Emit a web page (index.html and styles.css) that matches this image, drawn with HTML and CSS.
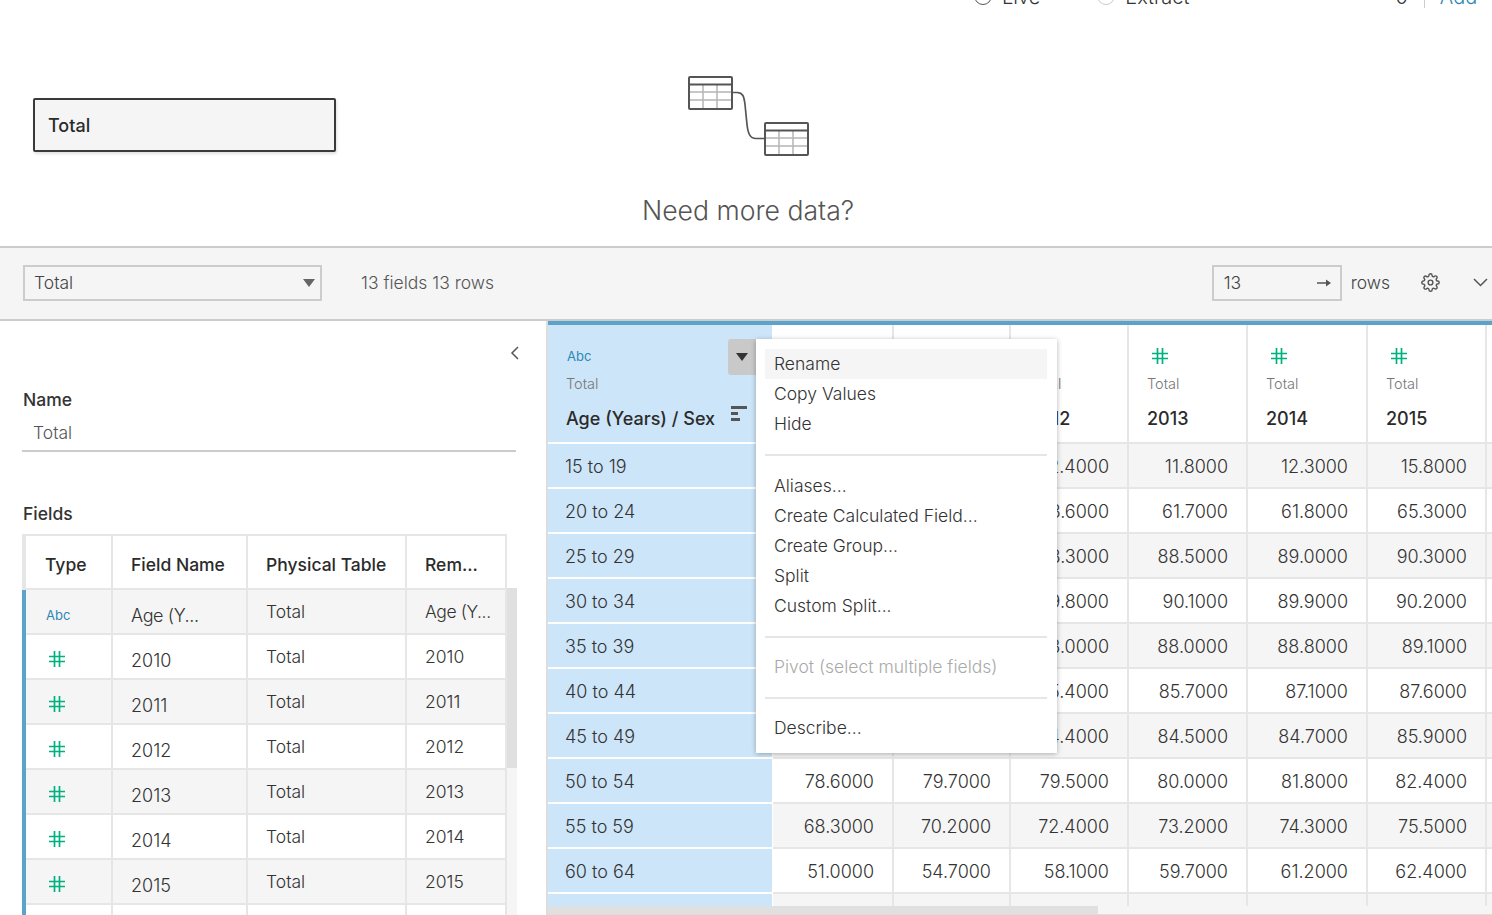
FILE: index.html
```html
<!DOCTYPE html>
<html lang="en">
<head>
  <meta charset="UTF-8">
  <title>Data Source</title>
  <link rel="stylesheet" href="styles.css">
</head>
<body>
  <div class="top-strip">
    <span class="radio"></span><span class="conn-label">Live</span>
    <span class="radio radio-off"></span><span class="conn-label">Extract</span>
    <span class="filter-count">0</span>
    <span class="filter-sep"></span>
    <span class="add-link">Add</span>
  </div>

  <section class="canvas">
    <div class="canvas-side">
      <div class="table-pill">Total</div>
    </div>
    <div class="need-data">
      <svg class="tables-art" width="122" height="82" viewBox="0 0 122 82">
        <g fill="none" stroke="#b5b5b5" stroke-width="1.5">
          <path d="M2 16h41M2 24h41M15 9v24M29 9v24"/>
          <path d="M78 62h41M78 70h41M91 55v24M105 55v24"/>
        </g>
        <g fill="none" stroke="#555" stroke-width="2">
          <rect x="1" y="1" width="43" height="32" rx="1"/>
          <path d="M1 8.500h43"/>
          <rect x="77" y="47" width="43" height="32" rx="1"/>
          <path d="M77 54.500h43"/>
          <path d="M44 16.500h5c6 0 7 4 8 12l2 20c1 9 3 14 9 14h9" stroke-width="1.700"/>
        </g>
      </svg>
      <div class="need-title">Need more data?</div>
    </div>
  </section>

  <div class="toolbar">
    <div class="select-box">
      <span>Total</span>
      <span class="caret"></span>
    </div>
    <span class="summary">13 fields 13 rows</span>
    <div class="rows-input">
      <span>13</span>
      <svg width="14" height="10" viewBox="0 0 14 10"><path d="M0 5h10" stroke="#555" stroke-width="1.500"/><path d="M9 1.500l5 3.500-5 3.500z" fill="#555"/></svg>
    </div>
    <span class="rows-label">rows</span>
    <svg class="gear" width="19" height="19" viewBox="0 0 24 24" fill="none" stroke="#555" stroke-width="1.800"><circle cx="12" cy="12" r="3"/><path d="M19.4 15a1.65 1.65 0 0 0 .33 1.82l.06.06a2 2 0 0 1 0 2.83 2 2 0 0 1-2.83 0l-.06-.06a1.65 1.65 0 0 0-1.82-.33 1.65 1.65 0 0 0-1 1.51V21a2 2 0 0 1-2 2 2 2 0 0 1-2-2v-.09A1.65 1.65 0 0 0 9 19.4a1.65 1.65 0 0 0-1.82.33l-.06.06a2 2 0 0 1-2.83 0 2 2 0 0 1 0-2.83l.06-.06a1.65 1.65 0 0 0 .33-1.82 1.65 1.65 0 0 0-1.51-1H3a2 2 0 0 1-2-2 2 2 0 0 1 2-2h.09A1.65 1.65 0 0 0 4.600 9a1.65 1.65 0 0 0-.33-1.82l-.06-.06a2 2 0 0 1 0-2.83 2 2 0 0 1 2.83 0l.06.06a1.65 1.65 0 0 0 1.82.33H9a1.65 1.65 0 0 0 1-1.51V3a2 2 0 0 1 2-2 2 2 0 0 1 2 2v.09a1.65 1.65 0 0 0 1 1.51 1.65 1.65 0 0 0 1.82-.33l.06-.06a2 2 0 0 1 2.83 0 2 2 0 0 1 0 2.83l-.06.06a1.65 1.65 0 0 0-.33 1.82V9a1.65 1.65 0 0 0 1.51 1H21a2 2 0 0 1 2 2 2 2 0 0 1-2 2h-.09a1.65 1.65 0 0 0-1.51 1z"/></svg>
    <svg class="chevron" width="15" height="9" viewBox="0 0 15 9"><path d="M1 1l6.500 6.500L14 1" fill="none" stroke="#555" stroke-width="1.500"/></svg>
  </div>

  <div class="main">
    <aside class="side">
      <div class="collapse-row">
        <svg width="9" height="14" viewBox="0 0 9 14"><path d="M8 1L2 7l6 6" fill="none" stroke="#555" stroke-width="1.500"/></svg>
      </div>
      <div class="side-label">Name</div>
      <div class="name-field">Total</div>
      <div class="side-label fields-label">Fields</div>

      <div class="fields-wrap">
        <div class="fields">
          <div class="f-row f-head">
            <div class="f-cell">Type</div>
            <div class="f-cell">Field Name</div>
            <div class="f-cell">Physical Table</div>
            <div class="f-cell">Rem...</div>
          </div>
          <div class="f-row alt">
            <div class="f-cell type-cell"><span class="abc">Abc</span></div>
            <div class="f-cell low trim">Age (Y...</div>
            <div class="f-cell">Total</div>
            <div class="f-cell trim">Age (Y...</div>
          </div>
          <div class="f-row">
            <div class="f-cell"><svg class="hash" viewBox="0 0 16 16"><path d="M5.500 0v16M10.500 0v16M0 5.500h16M0 10.500h16"/></svg></div>
            <div class="f-cell low">2010</div>
            <div class="f-cell">Total</div>
            <div class="f-cell">2010</div>
          </div>
          <div class="f-row alt">
            <div class="f-cell"><svg class="hash" viewBox="0 0 16 16"><path d="M5.500 0v16M10.500 0v16M0 5.500h16M0 10.500h16"/></svg></div>
            <div class="f-cell low">2011</div>
            <div class="f-cell">Total</div>
            <div class="f-cell">2011</div>
          </div>
          <div class="f-row">
            <div class="f-cell"><svg class="hash" viewBox="0 0 16 16"><path d="M5.500 0v16M10.500 0v16M0 5.500h16M0 10.500h16"/></svg></div>
            <div class="f-cell low">2012</div>
            <div class="f-cell">Total</div>
            <div class="f-cell">2012</div>
          </div>
          <div class="f-row alt">
            <div class="f-cell"><svg class="hash" viewBox="0 0 16 16"><path d="M5.500 0v16M10.500 0v16M0 5.500h16M0 10.500h16"/></svg></div>
            <div class="f-cell low">2013</div>
            <div class="f-cell">Total</div>
            <div class="f-cell">2013</div>
          </div>
          <div class="f-row">
            <div class="f-cell"><svg class="hash" viewBox="0 0 16 16"><path d="M5.500 0v16M10.500 0v16M0 5.500h16M0 10.500h16"/></svg></div>
            <div class="f-cell low">2014</div>
            <div class="f-cell">Total</div>
            <div class="f-cell">2014</div>
          </div>
          <div class="f-row alt">
            <div class="f-cell"><svg class="hash" viewBox="0 0 16 16"><path d="M5.500 0v16M10.500 0v16M0 5.500h16M0 10.500h16"/></svg></div>
            <div class="f-cell low">2015</div>
            <div class="f-cell">Total</div>
            <div class="f-cell">2015</div>
          </div>
          <div class="f-row">
            <div class="f-cell"></div>
            <div class="f-cell"></div>
            <div class="f-cell"></div>
            <div class="f-cell"></div>
          </div>
        </div>
        <div class="f-scroll"><div class="f-thumb"></div></div>
      </div>
    </aside>

    <div class="grid-area">
      <div class="grid">
        <div class="g-row g-head">
          <div class="g-cell first">
            <div class="g-type abc">Abc</div>
            <div class="g-table">Total</div>
            <div class="g-name">Age (Years) / Sex</div>
            <svg class="sort-icon" width="17" height="16" viewBox="0 0 17 16"><path d="M0 1.500h16M0 7.500h7M0 13.500h9" fill="none" stroke="#555" stroke-width="3"/></svg>
          </div>
          <div class="g-cell"></div>
          <div class="g-cell"></div>
          <div class="g-cell"><svg class="hash" viewBox="0 0 16 16"><path d="M5.500 0v16M10.500 0v16M0 5.500h16M0 10.500h16"/></svg><div class="g-table">Total</div><div class="g-name">2012</div></div>
          <div class="g-cell"><svg class="hash" viewBox="0 0 16 16"><path d="M5.500 0v16M10.500 0v16M0 5.500h16M0 10.500h16"/></svg><div class="g-table">Total</div><div class="g-name">2013</div></div>
          <div class="g-cell"><svg class="hash" viewBox="0 0 16 16"><path d="M5.500 0v16M10.500 0v16M0 5.500h16M0 10.500h16"/></svg><div class="g-table">Total</div><div class="g-name">2014</div></div>
          <div class="g-cell"><svg class="hash" viewBox="0 0 16 16"><path d="M5.500 0v16M10.500 0v16M0 5.500h16M0 10.500h16"/></svg><div class="g-table">Total</div><div class="g-name">2015</div></div>
          <div class="g-cell"></div>
        </div>
        <div class="g-row alt"><div class="g-cell first">15 to 19</div><div class="g-cell"></div><div class="g-cell"></div><div class="g-cell">12.4000</div><div class="g-cell">11.8000</div><div class="g-cell">12.3000</div><div class="g-cell">15.8000</div><div class="g-cell"></div></div>
        <div class="g-row"><div class="g-cell first">20 to 24</div><div class="g-cell"></div><div class="g-cell"></div><div class="g-cell">63.6000</div><div class="g-cell">61.7000</div><div class="g-cell">61.8000</div><div class="g-cell">65.3000</div><div class="g-cell"></div></div>
        <div class="g-row alt"><div class="g-cell first">25 to 29</div><div class="g-cell"></div><div class="g-cell"></div><div class="g-cell">88.3000</div><div class="g-cell">88.5000</div><div class="g-cell">89.0000</div><div class="g-cell">90.3000</div><div class="g-cell"></div></div>
        <div class="g-row"><div class="g-cell first">30 to 34</div><div class="g-cell"></div><div class="g-cell"></div><div class="g-cell">89.8000</div><div class="g-cell">90.1000</div><div class="g-cell">89.9000</div><div class="g-cell">90.2000</div><div class="g-cell"></div></div>
        <div class="g-row alt"><div class="g-cell first">35 to 39</div><div class="g-cell"></div><div class="g-cell"></div><div class="g-cell">88.0000</div><div class="g-cell">88.0000</div><div class="g-cell">88.8000</div><div class="g-cell">89.1000</div><div class="g-cell"></div></div>
        <div class="g-row"><div class="g-cell first">40 to 44</div><div class="g-cell"></div><div class="g-cell"></div><div class="g-cell">85.4000</div><div class="g-cell">85.7000</div><div class="g-cell">87.1000</div><div class="g-cell">87.6000</div><div class="g-cell"></div></div>
        <div class="g-row alt"><div class="g-cell first">45 to 49</div><div class="g-cell"></div><div class="g-cell"></div><div class="g-cell">84.4000</div><div class="g-cell">84.5000</div><div class="g-cell">84.7000</div><div class="g-cell">85.9000</div><div class="g-cell"></div></div>
        <div class="g-row"><div class="g-cell first">50 to 54</div><div class="g-cell">78.6000</div><div class="g-cell">79.7000</div><div class="g-cell">79.5000</div><div class="g-cell">80.0000</div><div class="g-cell">81.8000</div><div class="g-cell">82.4000</div><div class="g-cell"></div></div>
        <div class="g-row alt"><div class="g-cell first">55 to 59</div><div class="g-cell">68.3000</div><div class="g-cell">70.2000</div><div class="g-cell">72.4000</div><div class="g-cell">73.2000</div><div class="g-cell">74.3000</div><div class="g-cell">75.5000</div><div class="g-cell"></div></div>
        <div class="g-row"><div class="g-cell first">60 to 64</div><div class="g-cell">51.0000</div><div class="g-cell">54.7000</div><div class="g-cell">58.1000</div><div class="g-cell">59.7000</div><div class="g-cell">61.2000</div><div class="g-cell">62.4000</div><div class="g-cell"></div></div>
        <div class="g-row alt"><div class="g-cell first"></div><div class="g-cell"></div><div class="g-cell"></div><div class="g-cell"></div><div class="g-cell"></div><div class="g-cell"></div><div class="g-cell"></div><div class="g-cell"></div></div>
      </div>
      <div class="h-scroll"><div class="h-thumb"></div></div>

      <div class="drop-btn"><span class="caret dark"></span></div>
      <div class="menu">
        <div class="menu-item active">Rename</div>
        <div class="menu-item">Copy Values</div>
        <div class="menu-item">Hide</div>
        <div class="menu-sep first-sep"></div>
        <div class="menu-item">Aliases...</div>
        <div class="menu-item">Create Calculated Field...</div>
        <div class="menu-item">Create Group...</div>
        <div class="menu-item">Split</div>
        <div class="menu-item">Custom Split...</div>
        <div class="menu-sep"></div>
        <div class="menu-item disabled">Pivot (select multiple fields)</div>
        <div class="menu-sep"></div>
        <div class="menu-item">Describe...</div>
      </div>
    </div>
  </div>
</body>
</html>
```

FILE: styles.css
```css
* {
  box-sizing: border-box;
}

body {
  font-family: "Inter", "Open Sans", sans-serif;
  font-weight: 300;
  font-size: 17.500px;
  color: #333;
  margin: 0;
  padding: 0;
  height: 915px;
  overflow: hidden;
  background-color: #fff;
  display: flex;
  flex-direction: column;
}

/* cut off row at the very top */
.top-strip {
  height: 8px;
  flex: none;
  overflow: hidden;
  display: flex;
  align-items: flex-end;
  font-size: 20px;
  line-height: 20px;
}

.radio {
  width: 18px;
  height: 18px;
  margin-left: 974px;
  margin-bottom: 3px;
  border: 1.500px solid #555;
  border-radius: 50%;
  flex: none;
}

.radio-off {
  margin-left: 57px;
  border-color: #ccc;
}

.conn-label {
  margin-left: 10px;
  margin-bottom: 1px;
}

.filter-count {
  margin-left: 206px;
  margin-bottom: 1px;
}

.filter-sep {
  width: 1px;
  height: 8px;
  background-color: #ccc;
  margin-left: 16px;
}

.add-link {
  margin-left: 15px;
  margin-bottom: 1px;
  color: #2c88b5;
}

.canvas {
  height: 238px;
  flex: none;
  display: grid;
  grid-template-columns: 642px 212px 1fr;
}

.table-pill {
  width: 303px;
  height: 54px;
  margin: 90px 0 0 33px;
  padding-left: 13px;
  font-size: 18px;
  line-height: 51px;
  font-weight: 500;
  color: #2b2b2b;
  background-color: #f5f5f5;
  border: 2px solid #3a3a3a;
  border-radius: 2px;
  box-shadow: 1px 2px 3px rgba(0, 0, 0, 0.12);
}

.need-data {
  text-align: center;
  padding-top: 68px;
}

.tables-art {
  display: block;
  margin-left: 46px;
}

.need-title {
  font-size: 26.600px;
  color: #555;
  white-space: nowrap;
  margin-top: 36px;
  line-height: 32px;
}

.toolbar {
  height: 75px;
  flex: none;
  display: flex;
  align-items: center;
  background-color: #f5f5f5;
  border-top: 2px solid #ccc;
  border-bottom: 2px solid #ccc;
  padding: 0 0 2px 23px;
  color: #444;
}

.select-box {
  width: 299px;
  height: 36px;
  border: 2px solid #ccc;
  display: flex;
  align-items: center;
  justify-content: space-between;
  padding: 0 5px 0 9px;
}

.caret {
  width: 0;
  height: 0;
  border-left: 6px solid transparent;
  border-right: 6px solid transparent;
  border-top: 8px solid #666;
}

.caret.dark {
  border-top-color: #333;
}

.summary {
  margin-left: 39px;
  color: #555;
}

.rows-input {
  width: 130px;
  height: 36px;
  margin-left: auto;
  border: 2px solid #ccc;
  display: flex;
  align-items: center;
  justify-content: space-between;
  padding: 0 9px 0 10px;
}

.rows-label {
  margin-left: 9px;
}

.gear {
  margin-left: 31px;
}

.chevron {
  margin: 0 4px 0 33px;
}

.main {
  flex: 1;
  display: flex;
  min-height: 0;
}

.side {
  width: 548px;
  flex: none;
  padding-left: 22px;
  border-right: 2px solid #ddd;
  overflow: hidden;
}

.collapse-row {
  display: flex;
  justify-content: flex-end;
  padding: 25px 27px 0 0;
  height: 66px;
}

.side-label {
  font-weight: 500;
  line-height: 26px;
  color: #333;
  padding-left: 1px;
}

.name-field {
  width: 494px;
  height: 39px;
  padding: 7px 0 0 11px;
  line-height: 26px;
  border-bottom: 2px solid #ccc;
  color: #555;
}

.fields-label {
  margin-top: 49px;
}

.fields-wrap {
  display: flex;
  margin-top: 7px;
}

.fields {
  width: 485px;
  flex: none;
  border-top: 2px solid #e6e6e6;
}

.f-row {
  display: grid;
  grid-template-columns: 87px 135px 159px 100px;
  height: 45px;
  border-left: 4px solid #5ba3cb;
}

.f-row.alt,
.g-row.alt {
  background-color: #f5f5f5;
}

.f-head {
  height: 54px;
  border-left-color: #e6e6e6;
  font-weight: 500;
  color: #2b2b2b;
}

.f-cell {
  display: flex;
  align-items: center;
  padding-left: 18px;
  border-right: 2px solid #e6e6e6;
  border-bottom: 2px solid #e6e6e6;
  white-space: nowrap;
  overflow: hidden;
}

.f-cell:first-child {
  padding-left: 19px;
}

.f-cell.low {
  padding-top: 8px;
  font-size: 18px;
}

.f-cell.trim {
  letter-spacing: -0.4px;
}

.f-head .f-cell {
  padding-top: 4px;
}

.f-cell .hash {
  margin: 4px 0 0 4px;
}

.type-cell {
  padding-top: 6px;
}

.type-cell .abc {
  margin-left: 1px;
}

.abc {
  font-size: 13px;
  font-weight: 400;
  color: #2c88b5;
}

.hash {
  display: block;
  width: 16px;
  height: 16px;
  flex: none;
  fill: none;
  stroke: #00b180;
  stroke-width: 1.700;
}

.f-scroll {
  width: 10px;
  margin-top: 54px;
  background-color: #f5f5f5;
}

.f-thumb {
  height: 180px;
  background-color: #e0e0e0;
}

.grid-area {
  flex: 1;
  min-width: 0;
  position: relative;
  display: flex;
  flex-direction: column;
  border-bottom: 1px solid #ddd;
}

.grid {
  flex: 1;
  min-height: 0;
  overflow: hidden;
  font-size: 18px;
}

.g-row {
  display: grid;
  grid-template-columns: 225px 121px 117px 118px 119px 120px 119px 200px;
  height: 45px;
}

.g-head {
  height: 123px;
  background-color: #fff;
  border-top: 4px solid #5ba3cb;
}

.g-cell {
  display: flex;
  align-items: center;
  justify-content: flex-end;
  padding: 2px 18px 0 0;
  border-right: 2px solid #e6e6e6;
  border-bottom: 2px solid #e6e6e6;
  white-space: nowrap;
}

.g-cell.first {
  justify-content: flex-start;
  padding-left: 17px;
  background-color: #cde5f8;
  border-right: 1px solid #fff;
  border-bottom-color: #fff;
}

.g-head .g-cell {
  display: block;
  padding: 23px 0 0 18px;
  position: relative;
}

.g-head .g-cell.first {
  padding-left: 18px;
}

.g-type {
  height: 16px;
  line-height: 16px;
  margin-left: 1px;
}

.g-table {
  font-size: 14.500px;
  color: #777;
  line-height: 20px;
  margin-top: 10px;
}

.g-head .hash {
  margin-left: 5px;
}

.g-name {
  font-weight: 500;
  color: #2b2b2b;
  line-height: 24px;
  margin-top: 13px;
}

.sort-icon {
  position: absolute;
  left: 183px;
  top: 81px;
}

.h-scroll {
  height: 8px;
  flex: none;
  background-color: #f5f5f5;
}

.h-thumb {
  width: 550px;
  height: 100%;
  background-color: #e0e0e0;
}

.drop-btn {
  position: absolute;
  left: 180px;
  top: 18px;
  width: 28px;
  height: 36px;
  background-color: #c9c9c9;
  border-radius: 3px 0 0 3px;
  display: flex;
  align-items: center;
  justify-content: center;
}

.menu {
  position: absolute;
  left: 208px;
  top: 18px;
  width: 301px;
  height: 414px;
  padding: 10px 10px 10px 9px;
  background-color: #fff;
  box-shadow: 0 1px 5px rgba(0, 0, 0, 0.3);
}

.menu-item {
  height: 30px;
  line-height: 30px;
  padding-left: 9px;
}

.menu-item.active {
  background-color: #f5f5f5;
}

.menu-item.disabled {
  color: #aaa;
}

.menu-sep {
  height: 2px;
  margin: 15px 0 14px;
  background-color: #e6e6e6;
}

.menu-sep.first-sep {
  margin-bottom: 15px;
}
```
